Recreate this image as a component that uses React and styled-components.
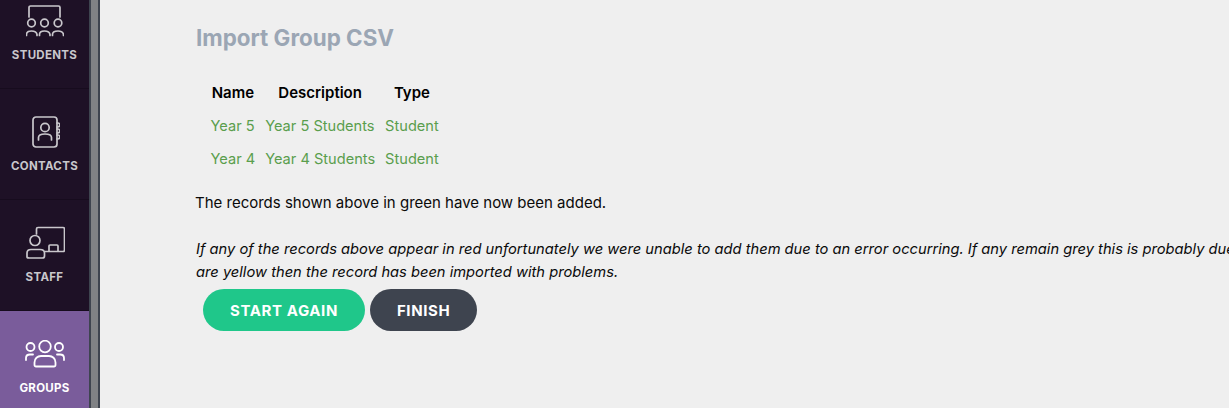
import styled, { createGlobalStyle } from "styled-components";

const GlobalStyle = createGlobalStyle`
  html, body {
    margin: 0;
    padding: 0;
    height: 100%;
    overflow: hidden;
    background: #efefef;
    font-family: "Inter", "Liberation Sans", sans-serif;
  }
`;

const IconStudents = () => (
  <svg width="38" height="32" viewBox="0 0 38 32" fill="none" stroke="currentColor" strokeWidth="1.7" strokeLinecap="round" strokeLinejoin="round">
    <path d="M3 12V2.500a1.500 1.500 0 0 1 1.500-1.500h28a1.500 1.500 0 0 1 1.500 1.500V12" />
    <circle cx="5.500" cy="18" r="3.800" />
    <circle cx="18.500" cy="18" r="3.800" />
    <circle cx="32" cy="18" r="3.800" />
    <path d="M0.500 30.500v-1c0-2.500 2-3.500 5-3.500s5 1 5.500 3.500v1" />
    <path d="M13.500 30.500v-1c0-2.500 2-3.500 5-3.500s5 1 5.500 3.500v1" />
    <path d="M26.500 30.500v-1c0-2.500 2-3.500 5.500-3.500s5 1 5.500 3.500v1" />
  </svg>
);

const IconContacts = () => (
  <svg width="30" height="33" viewBox="0 0 30 33" fill="none" stroke="currentColor" strokeWidth="1.7" strokeLinecap="round" strokeLinejoin="round">
    <rect x="3" y="1" width="24" height="30" rx="3" />
    <circle cx="15" cy="11.500" r="4.200" />
    <path d="M8.500 24v-2.500c0-2.500 2-3.500 6.500-3.500s6.500 1 6.500 3.500V24" />
    <path d="M27 7h.8a1.200 1.200 0 0 1 0 4H27M27 13h.8a1.200 1.200 0 0 1 0 4H27M27 19h.8a1.200 1.200 0 0 1 0 4H27" />
  </svg>
);

const IconStaff = () => (
  <svg width="40" height="34" viewBox="-1 0 40 34" fill="none" stroke="currentColor" strokeWidth="1.7" strokeLinecap="round" strokeLinejoin="round">
    <path d="M10.500 8V3a1.500 1.500 0 0 1 1.500-1.500h25a1.500 1.500 0 0 1 1.500 1.500v21a1.500 1.500 0 0 1-1.500 1.500H19" />
    <path d="M23 25v-5a1 1 0 0 1 1-1h7a1 1 0 0 1 1 1v5" />
    <circle cx="9" cy="14.500" r="5" />
    <path d="M1 31v-4c0-2.500 1.500-3.500 4-3.500h9c3 0 4.500 1 4.500 3.500v3c0 1.200-.8 2-2 2H3c-1.200 0-2-.8-2-1z" />
  </svg>
);

const IconGroups = () => (
  <svg width="40" height="28" viewBox="0 0 40 28" fill="none" stroke="currentColor" strokeWidth="1.800" strokeLinecap="round" strokeLinejoin="round">
    <circle cx="5.500" cy="7" r="4" />
    <circle cx="20" cy="6.500" r="5.800" />
    <circle cx="34" cy="7" r="4" />
    <path d="M1 20v-2c0-2.500 1.500-3.500 4-3.500h3" />
    <path d="M39 20v-2c0-2.500-1.500-3.500-4-3.500h-3" />
    <path d="M9.500 25v-2.500c0-4 3-6.500 6.500-6.500h8c3.500 0 6.500 2.500 6.500 6.500V25a1.500 1.500 0 0 1-1.500 1.500H11a1.500 1.500 0 0 1-1.500-1.500z" />
  </svg>
);

const navItems = [
  { label: "STUDENTS", Icon: IconStudents, height: 89, top: 5, gap: 12 },
  { label: "CONTACTS", Icon: IconContacts, height: 111, top: 27, gap: 11 },
  { label: "STAFF", Icon: IconStaff, height: 111, top: 26, gap: 11 },
  { label: "GROUPS", Icon: IconGroups, height: 97, top: 29, gap: 14, active: true },
];

const records = [
  { name: "Year 5", description: "Year 5 Students", type: "Student" },
  { name: "Year 4", description: "Year 4 Students", type: "Student" },
];

export default function App() {
  return (
    <>
      <GlobalStyle />
      <Page>
        <Sidebar>
          {navItems.map(({ label, Icon, height, top, gap, active }) => (
            <NavItem key={label} $height={height} $top={top} $gap={gap} $active={active}>
              <Icon />
              <NavLabel>{label}</NavLabel>
            </NavItem>
          ))}
        </Sidebar>
        <Scrollbar />
        <Main>
          <Title>Import Group CSV</Title>
          <Table>
            <thead>
              <tr>
                <HeadCell>Name</HeadCell>
                <HeadCell>Description</HeadCell>
                <HeadCell>Type</HeadCell>
              </tr>
            </thead>
            <tbody>
              {records.map((r) => (
                <tr key={r.name}>
                  <Cell>{r.name}</Cell>
                  <Cell>{r.description}</Cell>
                  <Cell>{r.type}</Cell>
                </tr>
              ))}
            </tbody>
          </Table>
          <Notice>The records shown above in green have now been added.</Notice>
          <Hint>
            If any of the records above appear in red unfortunately we were unable to add them due to an error occurring. If any remain grey this is probably due to a duplicate record. If any
            <br />
            are yellow then the record has been imported with problems.
          </Hint>
          <Actions>
            <Button $color="#1fc78a">START AGAIN</Button>
            <Button $color="#3e444f">FINISH</Button>
          </Actions>
        </Main>
      </Page>
    </>
  );
}

const Page = styled.div`
  display: flex;
  height: 408px;
  width: 1229px;
  overflow: hidden;
  background: #efefef;
`;

const Sidebar = styled.nav`
  display: flex;
  flex-direction: column;
  width: 89px;
  flex: none;
  background: #1e1126;
`;

const NavItem = styled.div`
  display: flex;
  flex-direction: column;
  align-items: center;
  box-sizing: border-box;
  height: ${(p) => p.$height}px;
  padding-top: ${(p) => p.$top}px;
  gap: ${(p) => p.$gap}px;
  color: ${(p) => (p.$active ? "#ffffff" : "#c9c7cc")};
  background: ${(p) => (p.$active ? "#7a5c9b" : "#1e1126")};
  border-bottom: ${(p) => (p.$active ? "none" : "1px solid #170c1e")};
`;

const NavLabel = styled.span`
  font-size: 11.5px;
  font-weight: 700;
  line-height: 13px;
  letter-spacing: 0.3px;
`;

const Scrollbar = styled.div`
  width: 7px;
  flex: none;
  background: #808285;
  border-left: 2px solid #3e444f;
  border-right: 2px solid #3e444f;
`;

const Main = styled.main`
  flex: none;
  width: 1400px;
  box-sizing: border-box;
  padding: 24px 0 0 96px;
`;

const Title = styled.h1`
  margin: 0;
  font-size: 22.4px;
  line-height: 28px;
  font-weight: 700;
  color: #9ba6b4;
`;

const Table = styled.table`
  margin: 24px 0 0 9.5px;
  border-collapse: separate;
  border-spacing: 0;
  font-size: 14.6px;
`;

const HeadCell = styled.th`
  padding: 0 5px;
  height: 33px;
  font-size: 15px;
  font-weight: 600;
  text-align: center;
  color: #000000;
`;

const Cell = styled.td`
  padding: 0 5px;
  height: 33px;
  color: #5a9e4d;
`;

const Notice = styled.p`
  margin: 16px 0 0 -1px;
  font-size: 15px;
  line-height: 23px;
  color: #0a0a0a;
`;

const Hint = styled.p`
  margin: 24px 0 0;
  font-size: 14.7px;
  line-height: 23px;
  font-style: italic;
  color: #0a0a0a;
  white-space: nowrap;
`;

const Actions = styled.div`
  display: flex;
  gap: 5px;
  margin: 5px 0 0 7px;
`;

const Button = styled.button`
  height: 42px;
  padding: 0 27px;
  border: none;
  border-radius: 21px;
  background: ${(p) => p.$color};
  color: #ffffff;
  font: 700 15px "Inter", "Liberation Sans", sans-serif;
  letter-spacing: 0.6px;
`;
